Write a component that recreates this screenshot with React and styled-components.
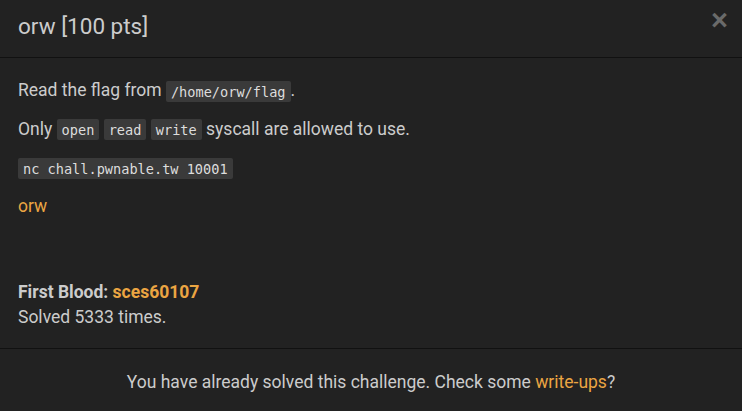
import React from "react";
import styled, { createGlobalStyle } from "styled-components";

const GlobalStyle = createGlobalStyle`
  html, body {
    margin: 0;
    padding: 0;
    background: #222222;
  }
  body {
    font-family: Roboto, "Liberation Sans", sans-serif;
    color: #cccccc;
  }
`;

const Modal = styled.div`
  width: 742px;
  height: 411px;
  background: #222222;
  overflow: hidden;
`;

const Header = styled.div`
  display: flex;
  justify-content: space-between;
  align-items: flex-start;
  height: 58px;
  box-sizing: border-box;
  padding: 10px 14px 0 18px;
  border-bottom: 1px solid #111111;
`;

const Title = styled.h4`
  margin: 0;
  font-size: 22.5px;
  font-weight: 400;
  line-height: 32px;
  color: #cccccc;
`;

const Close = styled.button`
  border: 0;
  background: none;
  padding: 0;
  margin-top: -6px;
  font-family: "Liberation Sans", Arial, sans-serif;
  font-size: 29px;
  font-weight: 700;
  line-height: 32px;
  color: #6a6a6a;
  cursor: pointer;
`;

const Body = styled.div`
  display: flex;
  flex-direction: column;
  gap: 12.5px;
  padding: 20px 18px 18px;
  border-bottom: 1px solid #111111;
  font-size: 17.5px;
  line-height: 25px;
`;

const P = styled.p`
  margin: 0;
`;

const Code = styled.code`
  font-family: "DejaVu Sans Mono", "Liberation Mono", monospace;
  font-size: 13.6px;
  padding: 2.5px 5px;
  background: #3a3a3a;
  color: #dddddd;
  border-radius: 2px;
`;

const Link = styled.a`
  color: #eba542;
  text-decoration: none;
  font-weight: ${(p) => (p.$bold ? 700 : 400)};
`;

const Stats = styled.div`
  margin-top: 49px;
`;

const Label = styled.b`
  font-weight: 700;
`;

const Footer = styled.div`
  padding: 21px 18px 17px;
  text-align: center;
  font-size: 17.5px;
  line-height: 25px;
`;

export default function App() {
  return (
    <>
      <GlobalStyle />
      <Modal>
        <Header>
          <Title>orw [100 pts]</Title>
          <Close aria-label="Close">×</Close>
        </Header>
        <Body>
          <P>
            Read the flag from <Code>/home/orw/flag</Code>.
          </P>
          <P>
            Only <Code>open</Code> <Code>read</Code> <Code>write</Code> syscall are allowed to use.
          </P>
          <P>
            <Code>nc chall.pwnable.tw 10001</Code>
          </P>
          <P>
            <Link href="#">orw</Link>
          </P>
          <Stats>
            <Label>First Blood: </Label>
            <Link href="#" $bold>sces60107</Link>
            <br />
            Solved 5333 times.
          </Stats>
        </Body>
        <Footer>
          You have already solved this challenge. Check some <Link href="#">write-ups</Link>?
        </Footer>
      </Modal>
    </>
  );
}
